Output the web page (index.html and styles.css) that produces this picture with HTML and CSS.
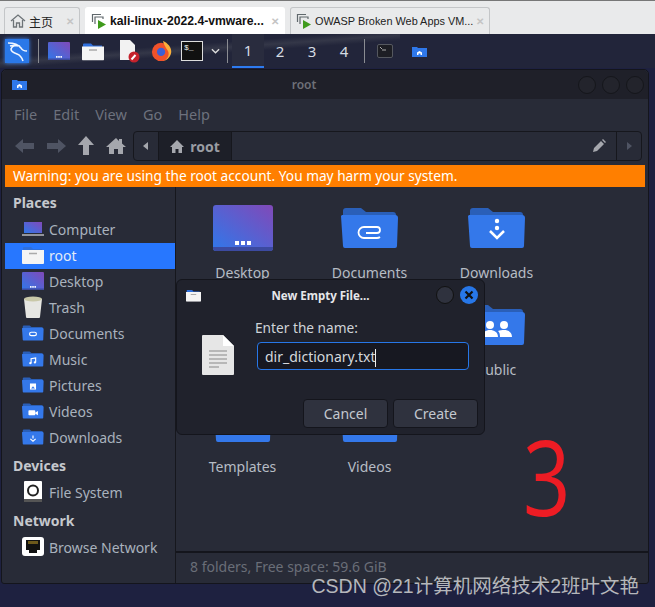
FILE: index.html
```html
<!DOCTYPE html>
<html lang="en">
<head>
    <meta charset="UTF-8">
    <meta name="viewport" content="width=device-width, initial-scale=1.0">
    <title>kali-linux-2022.4-vmware</title>
    <link rel="stylesheet" href="styles.css">
</head>
<body>
    <svg class="defs" width="0" height="0">
        <defs>
            <linearGradient id="screen" x1="0" y1="1" x2="1" y2="0">
                <stop offset="0" stop-color="#2f78ea"/>
                <stop offset="1" stop-color="#8149b8"/>
            </linearGradient>
            <symbol id="folder" viewBox="0 0 58 42">
                <path d="M2 4a3 3 0 0 1 3-3h15l5 4h27a3 3 0 0 1 3 3v10H2z" fill="#2a5fb8"/>
                <path d="M1 8h53a3 3 0 0 1 3 3l-1 28a2 2 0 0 1-2 2H4a2 2 0 0 1-2-2L0 9z" fill="#3478ea"/>
            </symbol>
            <symbol id="whitefolder" viewBox="0 0 22 18">
                <path d="M1 2a1 1 0 0 1 1-1h7l2 2h9v6H1z" fill="#2f6fdc"/>
                <path d="M0 4h22v13a1 1 0 0 1-1 1H1a1 1 0 0 1-1-1z" fill="#f4f4f4"/>
                <path d="M7 7.500h8" stroke="#aaa" stroke-width="1.500"/>
            </symbol>
            <symbol id="desktop" viewBox="0 0 60 46">
                <rect width="60" height="46" rx="3" fill="url(#screen)"/>
                <path d="M0 42h60v1a3 3 0 0 1-3 3H3a3 3 0 0 1-3-3z" fill="#3c4aa0"/>
                <path d="M22 36h4v4h-4zM28 36h4v4h-4zM34 36h4v4h-4z" fill="#fff"/>
            </symbol>
        </defs>
    </svg>

    <div class="tabs">
        <div class="tab home-tab">
            <svg class="tab-icon" viewBox="0 0 16 16"><path d="M1 8l7-6 7 6M3.500 7v7h3v-4h3v4h3V7" fill="none" stroke="#6d7377" stroke-width="1.300"/></svg>
            <span class="tab-name">主页</span>
            <span class="tab-x">✕</span>
        </div>
        <div class="tab tab-on">
            <svg class="tab-icon" viewBox="0 0 16 16"><path d="M1.500 9V1.500H10M4 11V4h8v2" fill="none" stroke="#60686c" stroke-width="1.200"/><path d="M7 7l8 4.500-8 4.500z" fill="#3f9a1c"/></svg>
            <span class="tab-name">kali-linux-2022.4-vmware...</span>
            <span class="tab-x">✕</span>
        </div>
        <div class="tab tab-vm">
            <svg class="tab-icon" viewBox="0 0 16 16"><path d="M1.500 9V1.500H10M4 11V4h8v2" fill="none" stroke="#60686c" stroke-width="1.200"/><path d="M7 7l8 4.500-8 4.500z" fill="#3f9a1c"/></svg>
            <span class="tab-name">OWASP Broken Web Apps VM...</span>
            <span class="tab-x">✕</span>
        </div>
    </div>

    <div class="desk">
        <div class="panel">
            <div class="kali-logo">
                <svg viewBox="0 0 24 24" width="24" height="24"><path d="M3 4c5 0 10 1 13 5 1 2 4 3 6 3M15 7c-4-1-8 0-9 3 0 3 3 4 6 5 3 1 5 4 6 7M5 7c3-1 6-1 8 0" fill="none" stroke="#f0f6ff" stroke-width="1.600"/></svg>
            </div>
            <i class="sep sep-first"></i>
            <svg class="launcher" viewBox="0 0 60 46" width="22" height="18" preserveAspectRatio="none"><use href="#desktop"/></svg>
            <svg class="launcher folder-launcher" viewBox="0 0 22 18" width="22" height="19"><use href="#whitefolder"/></svg>
            <svg class="launcher doc-launcher" viewBox="0 0 22 24" width="22" height="24"><path d="M2 1h10l5 5v15H2z" fill="#f2f2f2"/><circle cx="16" cy="18" r="5.500" fill="#c5222c"/><path d="M13.500 20.500l4-4.500" stroke="#fff" stroke-width="2"/></svg>
            <svg class="launcher fox" viewBox="0 0 24 24" width="22" height="22"><circle cx="11" cy="13" r="10" fill="#f0522b"/><path d="M13 1c5 2 10 7 9 13-1 5-5 9-9 9 5-2 7-6 6-10-1-3-4-5-6-12z" fill="#fbb03b"/><circle cx="11" cy="13" r="4.500" fill="#3d5fd6"/></svg>
            <span class="term-launcher">$_</span>
            <svg class="chev" viewBox="0 0 10 6" width="9" height="6"><path d="M1 1l4 4 4-4" fill="none" stroke="#ddd" stroke-width="1.500"/></svg>
            <i class="sep"></i>
            <div class="ws ws-on">1</div>
            <div class="ws">2</div>
            <div class="ws">3</div>
            <div class="ws">4</div>
            <i class="sep sep-last"></i>
            <span class="task-term"><svg viewBox="0 0 14 12" width="14" height="12"><path d="M2 2l2 2M4 5h4" stroke="#aaa" fill="none"/></svg></span>
            <svg class="task-folder" viewBox="0 0 15 11" width="15" height="11"><path d="M0 1h5l1 1h9v9H0z" fill="#2f78ea"/><path d="M5 9V6.500L7.500 5 10 6.500V9H8.500V7.500h-2V9z" fill="#fff"/></svg>
        </div>

        <div class="window">
            <div class="titlebar">
                <svg class="title-icon" viewBox="0 0 15 11" width="15" height="11"><path d="M0 1h5l1 1h9v9H0z" fill="#2f78ea"/><path d="M5 9V6.500L7.500 5 10 6.500V9H8.500V7.500h-2V9z" fill="#fff"/></svg>
                <span class="title-text">root</span>
                <div class="win-btns"><i></i><i></i><i></i></div>
            </div>
            <div class="menubar">
                <span>File</span><span>Edit</span><span>View</span><span>Go</span><span>Help</span>
            </div>
            <div class="toolbar">
                <svg class="nav" viewBox="0 0 20 18" width="20" height="18"><path d="M0 9l8-7v4h11v6H8v4z" fill="#4f5463"/></svg>
                <svg class="nav" viewBox="0 0 20 18" width="20" height="18"><path d="M20 9l-8-7v4H1v6h11v4z" fill="#4f5463"/></svg>
                <svg class="nav" viewBox="0 0 18 20" width="18" height="20"><path d="M9 0l8 9h-5v10H6V9H1z" fill="#a5a7ad"/></svg>
                <svg class="nav" viewBox="0 0 20 18" width="20" height="18"><path d="M10 1L0 10h3v7h5v-5h4v5h5v-7h3l-4-3.500V2h-3v2z" fill="#a5a7ad"/></svg>
                <div class="pathbar">
                    <span class="path-back"></span>
                    <span class="path-crumb">
                        <svg viewBox="0 0 14 13" width="14" height="13"><path d="M7 0L0 7h2v6h3.500V9h3v4H12V7h2z" fill="#a5a7ad"/></svg>
                        root
                    </span>
                    <span class="path-fill"></span>
                    <svg class="path-edit" viewBox="0 0 14 14" width="14" height="14"><path d="M1 13l1-4 7-7 3 3-7 7zM10 1l1-1 3 3-1 1z" fill="#a5a7ad"/></svg>
                    <span class="path-next"></span>
                </div>
            </div>
            <div class="warning">Warning: you are using the root account. You may harm your system.</div>
            <div class="body">
                <aside class="sidebar">
                    <h4>Places</h4>
                    <div class="place"><svg viewBox="0 0 22 14" width="22" height="14"><rect x="2" width="18" height="11" fill="url(#screen)"/><path d="M0 13h22" stroke="#fff"/></svg>Computer</div>
                    <div class="place place-on"><svg viewBox="0 0 22 18" width="22" height="18"><use href="#whitefolder"/></svg>root</div>
                    <div class="place"><svg viewBox="0 0 60 46" width="22" height="18" preserveAspectRatio="none"><use href="#desktop"/></svg>Desktop</div>
                    <div class="place"><svg viewBox="0 0 20 22" width="22" height="22"><path d="M1 3h18l-2 18a1 1 0 0 1-1 1H4a1 1 0 0 1-1-1z" fill="#e6e6e2"/><ellipse cx="10" cy="3" rx="9" ry="2.500" fill="#c9c8a8"/></svg>Trash</div>
                    <div class="place"><svg viewBox="0 0 58 42" width="22" height="16"><use href="#folder"/><rect x="20" y="19" width="18" height="9" rx="4.500" fill="none" stroke="#fff" stroke-width="3"/></svg>Documents</div>
                    <div class="place"><svg viewBox="0 0 58 42" width="22" height="16"><use href="#folder"/><path d="M24 32V20l12-2v12" fill="none" stroke="#fff" stroke-width="3"/><circle cx="22" cy="32" r="3" fill="#fff"/><circle cx="34" cy="30" r="3" fill="#fff"/></svg>Music</div>
                    <div class="place"><svg viewBox="0 0 58 42" width="22" height="16"><use href="#folder"/><rect x="21" y="17" width="16" height="16" fill="#fff"/><path d="M24 30l5-6 5 6z" fill="#3478ea"/></svg>Pictures</div>
                    <div class="place"><svg viewBox="0 0 58 42" width="22" height="16"><use href="#folder"/><rect x="17" y="19" width="18" height="13" rx="2" fill="#fff"/><path d="M35 25l7-4v11l-7-4z" fill="#fff"/></svg>Videos</div>
                    <div class="place"><svg viewBox="0 0 58 42" width="22" height="16"><use href="#folder"/><path d="M29 17v8M22 26l7 6 7-6" fill="none" stroke="#fff" stroke-width="3"/></svg>Downloads</div>
                    <h4 class="group">Devices</h4>
                    <div class="place"><svg viewBox="0 0 20 22" width="22" height="22"><rect x="1" y="0" width="18" height="21" rx="1" fill="#fff"/><circle cx="10" cy="9.500" r="5" fill="none" stroke="#222" stroke-width="2"/><rect x="1" y="18" width="18" height="3" fill="#555"/></svg>File System</div>
                    <h4 class="group">Network</h4>
                    <div class="place"><svg viewBox="0 0 22 20" width="22" height="20"><rect width="22" height="19" rx="3" fill="#fff"/><path d="M4 3h14v10h-3v3H7v-3H4z" fill="#111"/><path d="M7 4v3M9 4v3M11 4v3M13 4v3M15 4v3" stroke="#c9a227"/></svg>Browse Network</div>
                </aside>
                <div class="right">
                    <main class="content">
                        <div class="grid">
                            <div class="item"><svg class="big" viewBox="0 0 60 46" width="60" height="46"><use href="#desktop"/></svg><span>Desktop</span></div>
                            <div class="item"><svg class="big" viewBox="0 0 58 42" width="58" height="42"><use href="#folder"/><path d="M25 26h11a3 3 0 0 0 0-6H23a5.500 5.500 0 0 0 0 11h13a5 5 0 0 0 3-1" fill="none" stroke="#fff" stroke-width="1.800"/></svg><span>Documents</span></div>
                            <div class="item"><svg class="big" viewBox="0 0 58 42" width="58" height="42"><use href="#folder"/><circle cx="29" cy="14" r="2.200" fill="#fff"/><circle cx="29" cy="21" r="2.200" fill="#fff"/><path d="M22 24l7 7 7-7" fill="none" stroke="#fff" stroke-width="2.500"/></svg><span>Downloads</span></div>
                            <div class="item"><svg class="big" viewBox="0 0 58 42" width="58" height="42"><use href="#folder"/></svg><span>Music</span></div>
                            <div class="item"><svg class="big" viewBox="0 0 58 42" width="58" height="42"><use href="#folder"/></svg><span>Pictures</span></div>
                            <div class="item"><svg class="big" viewBox="0 0 58 42" width="58" height="42"><use href="#folder"/><circle cx="22" cy="21" r="4" fill="#fff"/><circle cx="36" cy="21" r="4" fill="#fff"/><path d="M14 33c0-5 4-7 8-7s8 2 8 7zM32 33c0-4-1-5-2-6 2-1 4-1 6-1 4 0 8 2 8 7z" fill="#fff"/></svg><span>Public</span></div>
                            <div class="item"><svg class="big" viewBox="0 0 58 42" width="58" height="42"><use href="#folder"/></svg><span>Templates</span></div>
                            <div class="item"><svg class="big" viewBox="0 0 58 42" width="58" height="42"><use href="#folder"/></svg><span>Videos</span></div>
                        </div>
                        <div class="big-three">3</div>
                    </main>
                    <div class="statusbar">8 folders, Free space: 59.6 GiB</div>
                </div>
            </div>
        </div>

        <div class="dialog">
            <div class="dlg-title">
                <svg viewBox="0 0 22 18" width="15" height="13"><use href="#whitefolder"/></svg>
                <span class="dlg-name">New Empty File...</span>
                <i class="dlg-min"></i>
                <i class="dlg-close"><svg viewBox="0 0 10 10" width="10" height="10"><path d="M1.500 1.500l7 7M8.500 1.500l-7 7" stroke="#111" stroke-width="2.200"/></svg></i>
            </div>
            <div class="dlg-main">
                <svg class="dlg-doc" viewBox="0 0 32 40" width="32" height="40"><path d="M0 1a1 1 0 0 1 1-1h20l11 11v28a1 1 0 0 1-1 1H1a1 1 0 0 1-1-1z" fill="#e6e6e6"/><path d="M21 0l11 11H21z" fill="#fff"/><path d="M7 16h18M7 20h18M7 24h18M7 28h18M7 32h10" stroke="#a8a8a8" stroke-width="1.500"/></svg>
                <div class="dlg-form">
                    <label>Enter the name:</label>
                    <div class="name-input">dir_dictionary.txt<i class="caret"></i></div>
                </div>
            </div>
            <div class="dlg-btns">
                <button>Cancel</button>
                <button>Create</button>
            </div>
        </div>

        <div class="watermark">CSDN @21计算机网络技术2班叶文艳</div>
    </div>
</body>
</html>
```

FILE: styles.css
```css
* {
    box-sizing: border-box;
}

html, body {
    height: 100%;
}

body {
    margin: 0;
    overflow: hidden;
    font-family: "Noto Sans", sans-serif;
    background: #e8e9ea;
}

.defs {
    position: absolute;
}

/* browser tabs */
.tabs {
    height: 34px;
    display: flex;
    gap: 5px;
    padding: 6px 0 0 4px;
    border-top: 1px solid #777;
    background: #e9eaeb;
}

.tab {
    height: 27px;
    display: flex;
    align-items: center;
    padding: 0 5px;
    font-size: 10.900px;
    font-family: "Liberation Sans", "Noto Sans CJK SC", sans-serif;
    color: #222;
    border: 1px solid #c4c6c8;
    border-bottom: none;
    border-radius: 3px 3px 0 0;
}

.home-tab {
    width: 76px;
    font-size: 12px;
}

.tab-on {
    width: 200px;
    background: #fff;
    font-weight: bold;
    font-size: 12.200px;
    color: #111;
    border-color: #fff;
}

.tab-vm {
    width: 200px;
}

.tab-icon {
    width: 16px;
    height: 16px;
    flex: none;
    margin-right: 3px;
}

.tab-name {
    flex: 1;
    white-space: nowrap;
    overflow: hidden;
}

.tab-x {
    color: #c4c4c4;
    font-size: 10px;
    font-weight: bold;
}

/* desktop */
.desk {
    position: relative;
    height: 573px;
    background: #1e2140;
    overflow: hidden;
}

.panel {
    height: 34px;
    display: flex;
    align-items: center;
    padding-left: 5px;
    background: linear-gradient(176deg, transparent 38%, #343748 47%, transparent 56%) no-repeat 0 0 / 400px 100%, #22253a;
}

.kali-logo {
    width: 24px;
    height: 24px;
    background: #2a78e8;
    box-shadow: 0 0 4px #3f8cff;
}

.sep {
    width: 1px;
    height: 24px;
    flex: none;
    margin-right: 4px;
    background: #8a8c92;
}

.sep-first {
    margin: 0 0 0 9px;
}

.launcher {
    flex: none;
    margin-left: 9px;
}

.folder-launcher {
    margin-left: 12px;
}

.doc-launcher {
    margin-left: 14px;
}

.fox {
    margin-left: 11px;
}

.term-launcher {
    width: 22px;
    height: 20px;
    margin-left: 8px;
    border: 1px solid #ddd;
    background: #111;
    color: #eee;
    font: 8px "Liberation Mono", monospace;
    padding: 1px 2px;
}

.chev {
    margin: 0 7px 0 8px;
}

.ws {
    width: 32px;
    height: 34px;
    line-height: 34px;
    text-align: center;
    font-size: 15px;
    color: #d5dbe2;
}

.ws-on {
    background: #292c3e;
    border-bottom: 2px solid #2d7bf0;
    line-height: 32px;
}

.sep-last {
    margin: 0 12px 0 4px;
}

.task-term {
    width: 16px;
    height: 14px;
    display: flex;
    border: 1px solid #55585f;
    border-radius: 2px;
    background: #1d1e24;
}

.task-folder {
    margin-left: 19px;
}

/* file manager window */
.window {
    position: absolute;
    left: 1px;
    top: 35px;
    width: 648px;
    height: 515px;
    display: flex;
    flex-direction: column;
    background: #282b37;
    border: 1px solid #14151c;
    border-radius: 5px 5px 3px 3px;
    padding: 0 3px;
}

.titlebar {
    height: 29px;
    flex: none;
    display: flex;
    align-items: center;
    justify-content: space-between;
    margin: 0 -3px;
    padding: 0 4px 0 10px;
    background: #1f2029;
    border-radius: 5px 5px 0 0;
}

.title-text {
    font-size: 12px;
    font-weight: 600;
    color: #6e7078;
    margin-left: 3px;
}

.win-btns {
    display: flex;
    gap: 6px;
}

.win-btns i {
    width: 18px;
    height: 18px;
    border-radius: 50%;
    background: #23242c;
    border: 1px solid #15161b;
}

.menubar {
    height: 30px;
    flex: none;
    display: flex;
    gap: 16px;
    align-items: center;
    padding: 0 12px;
    margin: 0 -3px;
    background: #282b37;
    font-size: 14.500px;
    color: #6d717d;
}

.toolbar {
    height: 36px;
    flex: none;
    display: flex;
    align-items: center;
    gap: 11px;
    padding: 0 3px 2px 10px;
}

.pathbar {
    flex: 1;
    height: 30px;
    display: flex;
    align-items: center;
    margin-left: -4px;
    border: 1px solid #16171d;
    border-radius: 4px;
    background: #282b37;
}

.path-back {
    width: 25px;
    height: 100%;
    border-right: 1px solid #16171d;
    position: relative;
}

.path-back::after {
    content: "";
    position: absolute;
    left: 9px;
    top: 10px;
    border: 4px solid transparent;
    border-left: 0;
    border-right: 5px solid #a5a7ad;
}

.path-crumb {
    width: 73px;
    height: 100%;
    display: flex;
    align-items: center;
    justify-content: center;
    gap: 6px;
    background: #1d1f28;
    border-right: 1px solid #16171d;
    color: #9a9ca3;
    font-size: 14px;
    font-weight: 700;
}

.path-fill {
    flex: 1;
}

.path-edit {
    margin-right: 10px;
}

.path-next {
    width: 25px;
    height: 100%;
    border-left: 1px solid #16171d;
    position: relative;
}

.path-next::after {
    content: "";
    position: absolute;
    left: 10px;
    top: 10px;
    border: 4px solid transparent;
    border-right: 0;
    border-left: 5px solid #4f5463;
}

.warning {
    height: 22px;
    flex: none;
    line-height: 22px;
    padding-left: 8px;
    background: #ff7f00;
    color: #fff;
    font-size: 13.700px;
    white-space: nowrap;
}

.body {
    flex: 1;
    display: flex;
    min-height: 0;
}

.sidebar {
    width: 171px;
    flex: none;
    padding-top: 4px;
    border-right: 1px solid #16171d;
    color: #a9b2bd;
    font-size: 14px;
}

.sidebar h4 {
    margin: 0;
    height: 26px;
    line-height: 24px;
    padding-left: 8px;
    font-size: 14px;
    font-weight: 700;
    color: #c5c8cd;
}

.sidebar .group {
    margin-top: 3px;
}

.place {
    height: 26px;
    display: flex;
    align-items: center;
    padding: 0 0 2px 17px;
    white-space: nowrap;
}

.place svg {
    flex: none;
    margin-right: 5px;
}

.place-on {
    background: #2777ff;
    color: #e4ecf7;
}

.right {
    flex: 1;
    display: flex;
    flex-direction: column;
    min-width: 0;
}

.content {
    position: relative;
    flex: 1;
}

.grid {
    display: grid;
    grid-template-columns: repeat(3, 127px);
    grid-auto-rows: 97px;
    padding: 18px 0 0 2px;
    margin-left: 1px;
}

.item {
    display: flex;
    flex-direction: column;
    align-items: center;
    font-size: 14px;
    color: #b6bcc4;
}

.big {
    height: 46px;
    margin-bottom: 12px;
}

.big-three {
    position: absolute;
    left: 341px;
    top: 237px;
    font-family: "Open Sans", sans-serif;
    font-weight: 400;
    font-size: 104px;
    line-height: 1;
    color: #ed1c24;
    transform: scaleX(0.8);
}

.statusbar {
    height: 32px;
    flex: none;
    margin-right: -3px;
    padding: 4px 0 0 14px;
    border-top: 2px solid #14151c;
    font-size: 14px;
    color: #6a6e78;
}

/* dialog */
.dialog {
    position: absolute;
    left: 176px;
    top: 245px;
    width: 309px;
    height: 156px;
    display: flex;
    flex-direction: column;
    background: #20222c;
    border: 1px solid #14151c;
    border-radius: 6px;
}

.dlg-title {
    height: 30px;
    flex: none;
    display: flex;
    align-items: center;
    padding: 0 6px 0 9px;
}

.dlg-name {
    flex: 1;
    margin-left: 4px;
    text-align: center;
    font-size: 11.500px;
    font-weight: 700;
    color: #e6e7ea;
}

.dlg-min, .dlg-close {
    width: 18px;
    height: 18px;
    border-radius: 50%;
}

.dlg-min {
    background: #2f323e;
    border: 1px solid #111;
    margin-right: 6px;
}

.dlg-close {
    display: flex;
    align-items: center;
    justify-content: center;
    background: #2777e8;
}

.dlg-main {
    display: flex;
    padding-left: 25px;
}

.dlg-doc {
    margin: 25px 23px 0 0;
    flex: none;
}

.dlg-form label {
    display: block;
    height: 24px;
    margin: 6px 0 2px -2px;
    font-size: 13.700px;
    line-height: 24px;
    color: #cfd3d8;
}

.name-input {
    width: 212px;
    height: 28px;
    line-height: 27px;
    padding-left: 7px;
    border: 1px solid #2777e8;
    border-radius: 4px;
    background: #171821;
    font-size: 14px;
    color: #d5d8dd;
}

.caret {
    display: inline-block;
    width: 1px;
    height: 18px;
    vertical-align: middle;
    background: #eee;
}

.dlg-btns {
    display: flex;
    justify-content: flex-end;
    gap: 5px;
    padding: 24px 6px 0 0;
}

.dlg-btns button {
    width: 85px;
    height: 29px;
    font-family: inherit;
    font-size: 14px;
    color: #c3c8cf;
    background: #2f323e;
    border: 1px solid #14151c;
    border-radius: 4px;
}

.watermark {
    position: absolute;
    right: 16px;
    bottom: 11px;
    font-family: "Liberation Sans", "Noto Sans CJK SC", sans-serif;
    font-size: 19.500px;
    line-height: 1;
    color: #b5b7bb;
    white-space: nowrap;
}
```
